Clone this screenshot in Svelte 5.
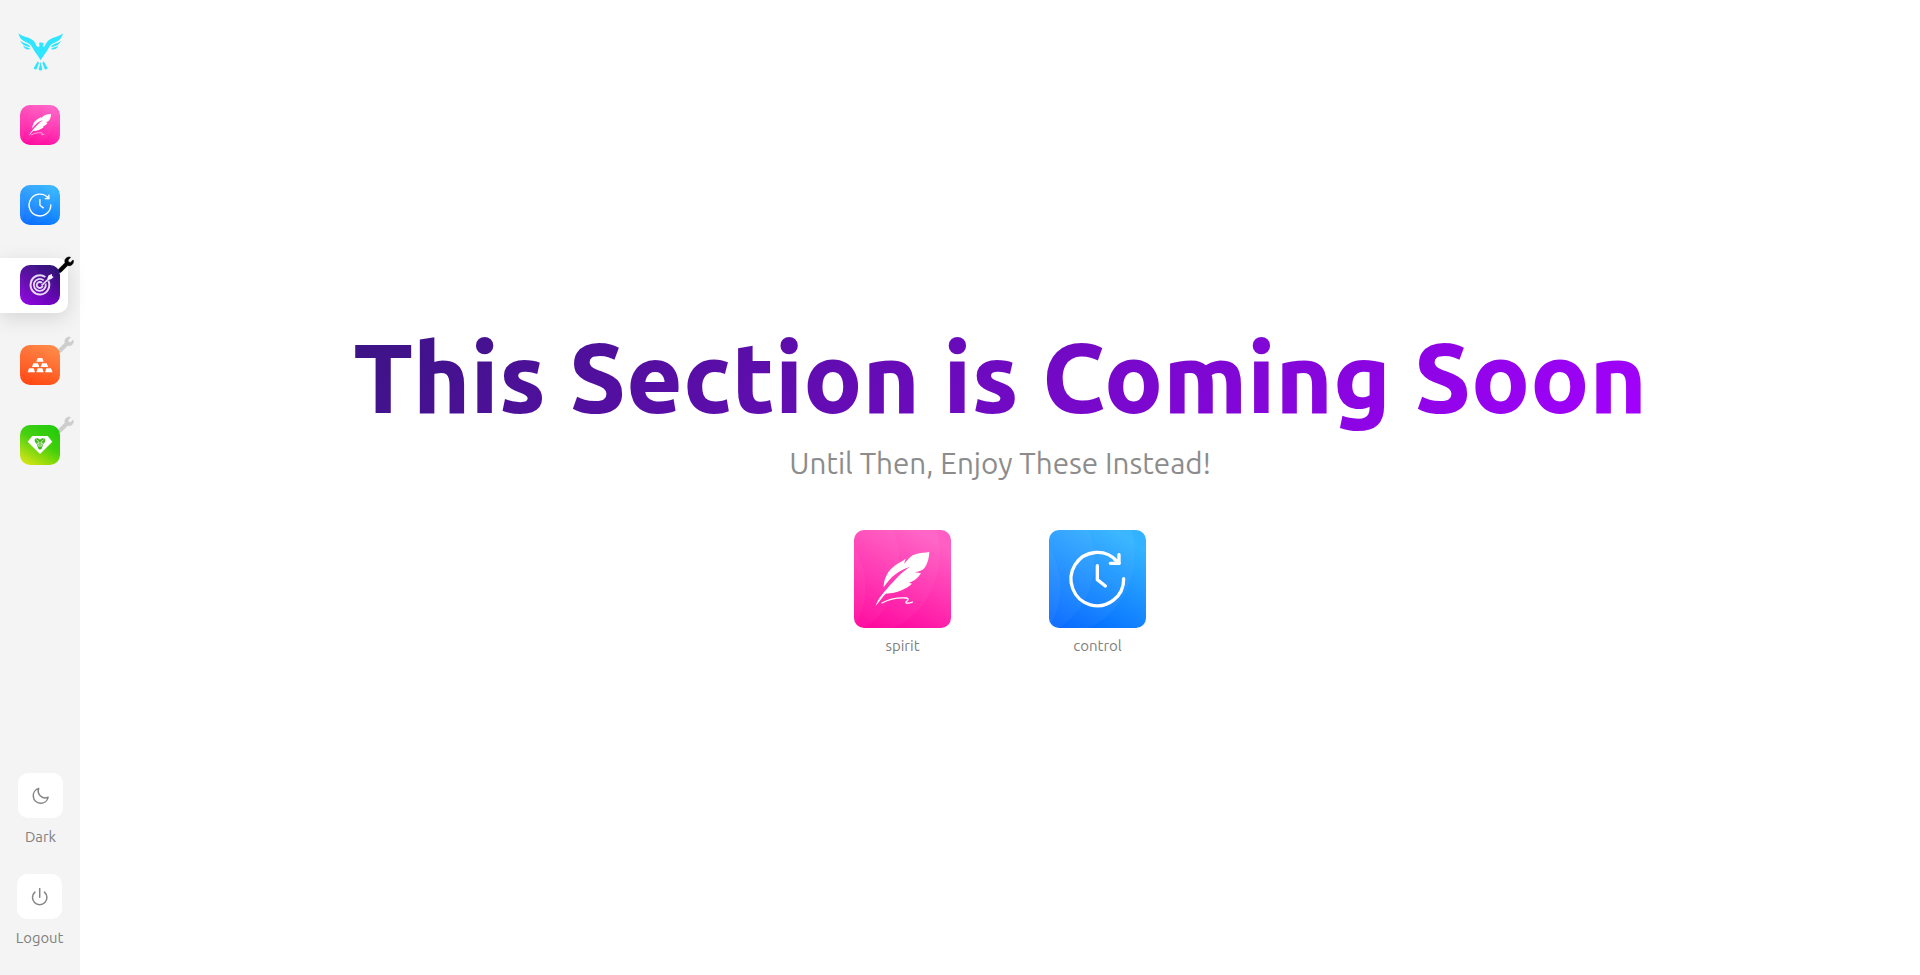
<script>
  const sections = [
    { id: 'spirit', top: '#ff5fc4', bottom: '#ff009c', soon: false },
    { id: 'control', top: '#33b3ff', bottom: '#0068ff', soon: false },
    { id: 'target', top: '#32107a', bottom: '#8a00dc', soon: true, active: true },
    { id: 'wealth', top: '#ff8644', bottom: '#ff420c', soon: true },
    { id: 'health', top: '#24cb0a', bottom: '#d4e40c', soon: true }
  ];
  const ready = sections.filter((s) => !s.soon);
</script>

{#snippet tile(s, prefix)}
  <svg class="tile" viewBox="0 0 120 120" preserveAspectRatio="none">
    <defs>
      <linearGradient id="{prefix}-{s.id}" x1=".72" y1="0.05" x2=".2" y2="1">
        <stop offset="0" stop-color={s.top} />
        {#if s.id === 'health'}<stop offset=".4" stop-color="#40d008" />{/if}
        <stop offset="1" stop-color={s.bottom} />
      </linearGradient>
    </defs>
    <rect width="120" height="120" fill="url(#{prefix}-{s.id})" />
    <g fill="#fff" fill-opacity={s.soon ? 0.02 : 0.04}>
      <ellipse cx="-40" cy="70" rx="54" ry="72" />
      <ellipse cx="-25" cy="38" rx="81" ry="92" />
      <ellipse cx="18" cy="28" rx="88" ry="98" />
    </g>
    {#if s.id === 'spirit'}
      <g transform="scale(.4124 .4082) translate(-42 -30)">
        <path fill="#fff" d="M107 257C112 241 121 229 133 215C153 193 176 163 210 140C177 151 153 168 131 202C131 177 143 152 166 136C177 127 187 124 197 116L192 131C205 119 210 105 232 101C243 98 256 98 268 96C267 112 264 128 255 142C248 151 240 154 225 157L243 160C231 177 222 184 207 188L216 191C198 207 173 219 137 221C128 230 119 244 107 257Z" />
        <path fill="none" stroke="#fff" stroke-width="4" stroke-linecap="round" stroke-linejoin="round" d="M126 249C148 237 172 232 198 234C208 235 205 239 198 246C195 251 207 250 217 246" />
      </g>
    {:else if s.id === 'control'}
      <g transform="scale(.4124 .4082) translate(-42 -30)" fill="none" stroke="#fff" stroke-width="10" stroke-linecap="round" stroke-linejoin="round">
        <path d="M266 176A79 80 0 1 1 246 124" />
        <path d="M252 104V130H226M187 137V179L211 198" />
        <path d="M238 117L252 130" />
      </g>
    {:else if s.id === 'target'}
      <g fill="none" stroke="#fff" stroke-opacity=".85">
        <path stroke-width="6" d="M76 36A28 29 0 1 0 85 47" />
        <path stroke-width="5.5" d="M71 46A18 18 0 1 0 77 56" />
        <path stroke-width="5.5" d="M66 54A9 9 0 1 0 68 62" />
        <path stroke-width="5" d="M65 61L90 38" />
      </g>
      <path fill="#fff" fill-opacity=".95" d="M82 40L86 31L96 27L96 33L101 36L93 43L85 44Z" />
    {:else if s.id === 'wealth'}
      <path fill="#fff" d="M53 39H67L71 50H49ZM40 55H54L58 66H36ZM66 55H80L85 66H62ZM27 70H41L45 82H23ZM53 70H67L71 82H49ZM79 70H93L98 82H75Z" />
    {:else}
      <path fill="#fff" d="M37 33H83L97 50L60 87L23 50Z" />
      <path fill="#42b71a" d="M60 44C56 38 44 37 44 47C44 52 50 54 51 59L55 71L60 74L65 71L69 59C70 54 76 52 76 47C76 37 64 38 60 44Z" />
      <path fill="none" stroke="#fff" stroke-width="2" d="M49 44L57 51L55 58M71 44L63 51L65 58M51 53L57 65M69 53L63 65M60 52V66" />
    {/if}
  </svg>
{/snippet}

<div class="page">
  <aside>
    <svg class="logo" viewBox="54 37 135 114" fill="#2fe5ff">
      <path d="M55 38C68 49 87 49 99 59C108 68 108 77 115 80L119 75L117 69C119 64 127 65 132 69L128 73L131 80C136 75 138 66 146 59C159 49 175 49 189 38C186 50 180 59 168 64C158 68 151 72 146 82C139 96 130 104 122 119C114 104 105 96 98 82C93 72 87 68 77 64C65 60 58 51 55 38Z" />
      <path d="M61 60C69 68 81 67 89 75L91 80C80 77 66 74 61 60ZM69 75C76 80 85 79 92 85C84 88 74 86 69 75ZM183 60C176 68 163 67 155 75L153 80C164 77 178 74 183 60ZM175 75C168 80 159 79 152 85C160 88 170 86 175 75ZM113 122L117 127L110 145C107 148 103 146 101 143ZM122 123L127 146C125 151 118 151 116 146ZM131 122L127 127L134 145C137 148 141 146 143 143Z" />
    </svg>
    <nav>
      {#each sections as s}
        <div class="item" class:active={s.active}>
          {#if s.soon}
            <svg class="wrench" viewBox="0 0 512 512"><path fill="currentColor" stroke="currentColor" stroke-width="18" d="M507.73 109.1c-2.24-9.03-13.54-12.09-20.12-5.51l-74.36 74.36-67.88-11.31-11.31-67.88 74.36-74.36c6.62-6.62 3.43-17.9-5.66-20.16-47.38-11.74-99.55.91-136.58 37.93-39.64 39.64-50.55 97.1-34.05 147.2L18.74 402.76c-24.99 24.99-24.99 65.51 0 90.5 24.99 24.99 65.51 24.99 90.5 0l213.21-213.21c50.12 16.71 107.47 5.68 147.37-34.22 37.07-37.07 49.7-89.32 37.91-136.73z" /></svg>
          {/if}
          {@render tile(s, 'nav')}
        </div>
      {/each}
    </nav>
    <div class="actions">
      <div class="action">
        <button aria-label="Dark"><svg viewBox="0 0 18 18"><path d="M6.7 1.5A7.5 7.5 0 1 0 16.1 10.3A7 7 0 0 1 6.7 1.5Z" /></svg></button>
        <span>Dark</span>
      </div>
      <div class="action logout">
        <button aria-label="Logout"><svg viewBox="0 0 18 18"><path d="M8.7 .6V9.2M3.9 4.1A7.2 7.2 0 1 0 13.5 4.1" /></svg></button>
        <span>Logout</span>
      </div>
    </div>
  </aside>
  <main>
    <h1><span>This Section is Coming Soon</span></h1>
    <p>Until Then, Enjoy These Instead!</p>
    <div class="cards">
      {#each ready as s}
        <div class="card">{@render tile(s, 'card')}<span>{s.id}</span></div>
      {/each}
    </div>
  </main>
</div>

<style>
  .page { display: flex; height: 975px; background: #fff; overflow: hidden; font-family: Ubuntu, "Noto Sans", sans-serif; color: #808080; }
  aside { width: 80px; flex: none; box-sizing: border-box; padding: 33px 0 29px; background: #f4f4f4; display: flex; flex-direction: column; }
  .logo { width: 45px; height: 38px; margin-left: 18px; flex: none; }
  nav { display: flex; flex-direction: column; gap: 25px; margin-top: 27px; }
  .item { position: relative; width: 68px; height: 55px; box-sizing: border-box; padding: 7px 0 0 20px; border-radius: 0 10px 10px 0; color: #cdcdcd; }
  .item .tile { position: relative; width: 40px; height: 40px; border-radius: 10px; display: block; }
  .active { background: #fff; box-shadow: 0 5px 20px rgba(0, 0, 0, .13); color: #000; }
  .wrench { position: absolute; width: 15.5px; height: 15.5px; left: 58px; top: -1px; overflow: visible; }
  .actions { margin-top: auto; display: flex; flex-direction: column; gap: 29px; }
  .action { height: 72px; display: flex; flex-direction: column; align-items: center; gap: 9px; padding-left: 1px; }
  .logout { padding: 0 1px 0 0; }
  button { width: 45px; height: 45px; padding: 0; border: 0; border-radius: 10px; background: #fff; display: grid; place-items: center; flex: none; }
  button svg { width: 18px; height: 18px; fill: none; stroke: #858585; stroke-width: 1.5; stroke-linecap: round; stroke-linejoin: round; }
  .action span, .card span { font-size: 15px; line-height: 20px; white-space: nowrap; }
  .action span { font-size: 14.8px; }
  main { flex: 1; display: flex; flex-direction: column; align-items: center; padding-top: 317px; }
  h1 { margin: 0; height: 120px; line-height: 120px; font-size: 97.5px; font-weight: 800; white-space: nowrap; }
  h1 span { display: inline-block; color: transparent; background: linear-gradient(135deg, #3a1483, #a400ff); background-clip: text; -webkit-background-clip: text; }
  p { margin: 6px 0 0; font-size: 29.6px; line-height: 40px; white-space: nowrap; color: #8c8c8c; }
  .cards { display: flex; gap: 98px; margin-top: 47px; }
  .card { display: flex; flex-direction: column; align-items: center; gap: 8px; }
  .card .tile { width: 97px; height: 98px; border-radius: 10px; }
</style>
